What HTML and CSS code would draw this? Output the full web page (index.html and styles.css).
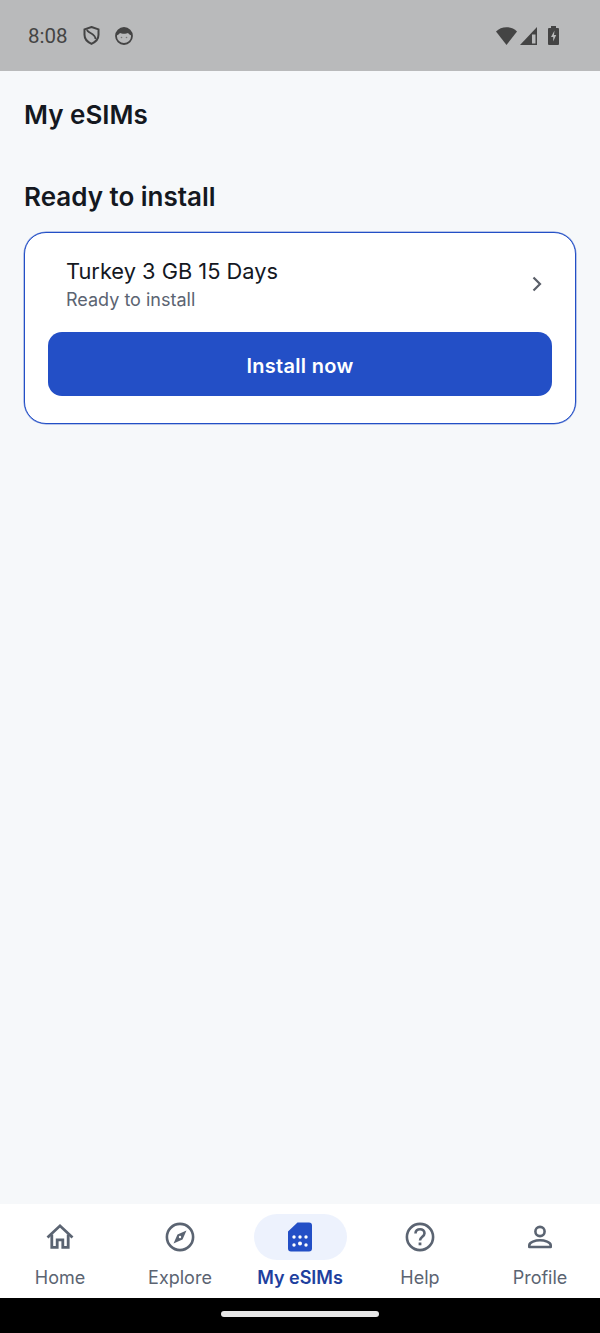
FILE: index.html
```html
<!DOCTYPE html>
<html lang="en">
<head>
    <meta charset="UTF-8">
    <meta name="viewport" content="width=device-width, initial-scale=1.0">
    <title>My eSIMs</title>
    <link rel="stylesheet" href="styles.css">
</head>
<body>
    <div class="status-bar">
        <div class="status-left">
            <span class="clock">8:08</span>
            <svg class="shield" viewBox="0 0 17 19" width="17" height="19" fill="none" stroke="#444" stroke-width="2">
                <path d="M8.500 1l7 2.400v5.400c0 4-2.900 7.300-7 9-4.100-1.700-7-5-7-9V3.400z"/>
                <path d="M4 3.500c0 3.500 8.500 4 8.500 9.500" stroke-width="1.800"/>
            </svg>
            <svg class="face" viewBox="0 0 18 18" width="18" height="18">
                <circle cx="9" cy="9" r="8" fill="none" stroke="#444" stroke-width="1.800"/>
                <path d="M1.500 8.500C1.500 4 4.500 1 9 1s7.500 3 7.500 7.500c-1.500-.5-2.700-1.200-3.500-2.500-1.500 1-6.500 1-8 0-.8 1.300-2 2-3.500 2.500z" fill="#444"/>
                <circle cx="6.500" cy="10.500" r=".8" fill="#777"/>
                <circle cx="11.500" cy="10.500" r=".8" fill="#777"/>
            </svg>
        </div>
        <div class="status-right">
            <svg class="wifi" viewBox="0 0 21 18" width="21" height="18">
                <path d="M0 4.500C2.800 1.800 6.400.3 10.500.3S18.200 1.800 21 4.500L10.500 18z" fill="#444"/>
            </svg>
            <svg class="signal" viewBox="0 0 17 18" width="17" height="18">
                <path d="M17 0v18H0z" fill="#444"/>
                <path d="M12 7.500h3.500V16.500H12z" fill="#b9babb"/>
            </svg>
            <svg class="battery" viewBox="0 0 11 19" width="11" height="19">
                <path d="M3 0h5v2h2a1 1 0 0 1 1 1v15a1 1 0 0 1-1 1H1a1 1 0 0 1-1-1V3a1 1 0 0 1 1-1h2z" fill="#444"/>
                <path d="M6.500 4.500L3 11h2.200v4.500L8.200 9H6z" fill="#b9babb"/>
            </svg>
        </div>
    </div>

    <main class="content">
        <h1 class="page-title">My eSIMs</h1>
        <h2 class="section-title">Ready to install</h2>
        <div class="card">
            <div class="card-row">
                <div>
                    <div class="plan-name">Turkey 3 GB 15 Days</div>
                    <div class="plan-status">Ready to install</div>
                </div>
                <svg class="chevron" viewBox="0 0 10 16" width="10" height="16" fill="none" stroke="#5a5f69" stroke-width="2.200">
                    <path d="M1.500 1.500L8 8l-6.500 6.500"/>
                </svg>
            </div>
            <button class="install-btn">Install now</button>
        </div>
    </main>

    <nav class="tab-bar">
        <div class="tab">
            <span class="tab-icon">
                <svg viewBox="0 0 30 30" width="30" height="30" fill="none" stroke="#5b6472" stroke-width="2.800" stroke-linejoin="miter">
                    <path d="M2.500 15.500L15 3.800l12.500 11.700"/>
                    <path d="M6.800 12.500v12.800h5.400v-7.500h5.600v7.500h5.400V12.500"/>
                </svg>
            </span>
            <span class="tab-label">Home</span>
        </div>
        <div class="tab">
            <span class="tab-icon">
                <svg viewBox="0 0 30 30" width="30" height="30">
                    <circle cx="15" cy="15" r="13.100" fill="none" stroke="#5b6472" stroke-width="2.600"/>
                    <path d="M21.500 8.500L17.500 17.500 8.500 21.500 12.500 12.500z" fill="#5b6472"/>
                    <circle cx="15" cy="15" r="1.200" fill="#fff"/>
                </svg>
            </span>
            <span class="tab-label">Explore</span>
        </div>
        <div class="tab active">
            <span class="tab-icon">
                <svg viewBox="0 0 24 30" width="24" height="30">
                    <path d="M9.500 .5H21a3 3 0 0 1 3 3v23a3 3 0 0 1-3 3H3a3 3 0 0 1-3-3V9.500z" fill="#234fc6"/>
                    <g fill="#fff">
                        <circle cx="6" cy="15" r="1.700"/>
                        <circle cx="6" cy="23" r="1.700"/>
                        <circle cx="12" cy="15" r="1.700"/>
                        <circle cx="12" cy="21.500" r="2"/>
                        <circle cx="18" cy="15" r="1.700"/>
                        <circle cx="18" cy="23" r="1.700"/>
                    </g>
                </svg>
            </span>
            <span class="tab-label">My eSIMs</span>
        </div>
        <div class="tab">
            <span class="tab-icon">
                <svg viewBox="0 0 30 30" width="30" height="30" fill="none" stroke="#5b6472" stroke-width="2.600">
                    <circle cx="15" cy="15" r="13.100"/>
                    <path d="M10.500 11.500c0-2.700 2-4.300 4.500-4.300s4.500 1.600 4.500 4c0 3.500-4.500 3.500-4.500 7.300"/>
                    <path d="M15 20.500v2.800" stroke-width="2.800"/>
                </svg>
            </span>
            <span class="tab-label">Help</span>
        </div>
        <div class="tab">
            <span class="tab-icon">
                <svg viewBox="0 0 30 30" width="30" height="30" fill="none" stroke="#5b6472" stroke-width="2.600">
                    <circle cx="15" cy="9.500" r="4.600"/>
                    <path d="M4.300 25v-1.800c0-2.900 6-4.900 10.700-4.900s10.700 2 10.700 4.900V25z" stroke-linejoin="round"/>
                </svg>
            </span>
            <span class="tab-label">Profile</span>
        </div>
    </nav>

    <div class="gesture-bar">
        <div class="gesture-pill"></div>
    </div>
</body>
</html>
```

FILE: styles.css
```css
:root {
    --blue: #234fc6;
    --blue-dark: #1e3f9e;
    --grey: #5b6472;
    --ink: #14181f;
}
* {
    box-sizing: border-box;
}
body {
    margin: 0;
    height: 1333px;
    display: flex;
    flex-direction: column;
    font-family: Inter, "Liberation Sans", sans-serif;
    background-color: #f6f8fa;
    color: var(--ink);
    overflow: hidden;
}
.status-bar {
    height: 71px;
    flex-shrink: 0;
    background-color: #b9babb;
    display: flex;
    justify-content: space-between;
    align-items: center;
    padding: 0 41px 0 28px;
}
.status-left {
    display: flex;
    align-items: center;
    gap: 15px;
}
.clock {
    font-family: Roboto, sans-serif;
    font-size: 20.500px;
    color: #444;
}
.status-right {
    display: flex;
    align-items: center;
    gap: 3px;
}
.status-right .battery {
    margin-left: 8px;
}
.content {
    flex: 1;
    padding: 0 24px;
}
.page-title {
    margin: 28px 0 0;
    font-size: 26px;
    line-height: 32px;
    font-weight: 600;
}
.section-title {
    margin: 50px 0 0;
    font-size: 26px;
    line-height: 32px;
    font-weight: 600;
}
.card {
    margin-top: 19px;
    height: 192px;
    background-color: #fff;
    border: 1px solid var(--blue);
    box-shadow: 0 0 0 0.5px rgba(35, 79, 198, 0.6);
    border-radius: 22px;
    padding: 24px 23px 0;
}
.card-row {
    display: flex;
    justify-content: space-between;
    align-items: center;
    padding: 0 10px 0 18px;
}
.chevron {
    margin-bottom: 2px;
}
.plan-name {
    font-size: 21.800px;
    line-height: 28px;
    margin-bottom: 2px;
}
.plan-status {
    font-size: 18px;
    line-height: 26px;
    color: var(--grey);
}
.install-btn {
    display: block;
    width: 100%;
    height: 64px;
    margin-top: 19px;
    padding-top: 4px;
    border: none;
    border-radius: 14px;
    background-color: var(--blue);
    color: #fff;
    font-family: inherit;
    font-size: 20px;
    font-weight: 600;
    letter-spacing: 0.3px;
}
.tab-bar {
    height: 94px;
    flex-shrink: 0;
    background-color: #fff;
    display: grid;
    grid-template-columns: repeat(5, 1fr);
    padding-top: 10px;
}
.tab {
    display: flex;
    flex-direction: column;
    align-items: center;
}
.tab-icon {
    width: 93px;
    height: 46px;
    border-radius: 23px;
    display: flex;
    align-items: center;
    justify-content: center;
}
.tab-label {
    margin-top: 5px;
    font-size: 18px;
    line-height: 26px;
    color: var(--grey);
}
.tab.active .tab-icon {
    background-color: #edf2fd;
}
.tab.active .tab-label {
    color: var(--blue-dark);
    font-weight: 600;
}
.gesture-bar {
    height: 35px;
    flex-shrink: 0;
    background-color: #000;
    display: flex;
    justify-content: center;
    padding-top: 13px;
}
.gesture-pill {
    width: 158px;
    height: 6px;
    border-radius: 3px;
    background-color: #e8e8e8;
}
```
